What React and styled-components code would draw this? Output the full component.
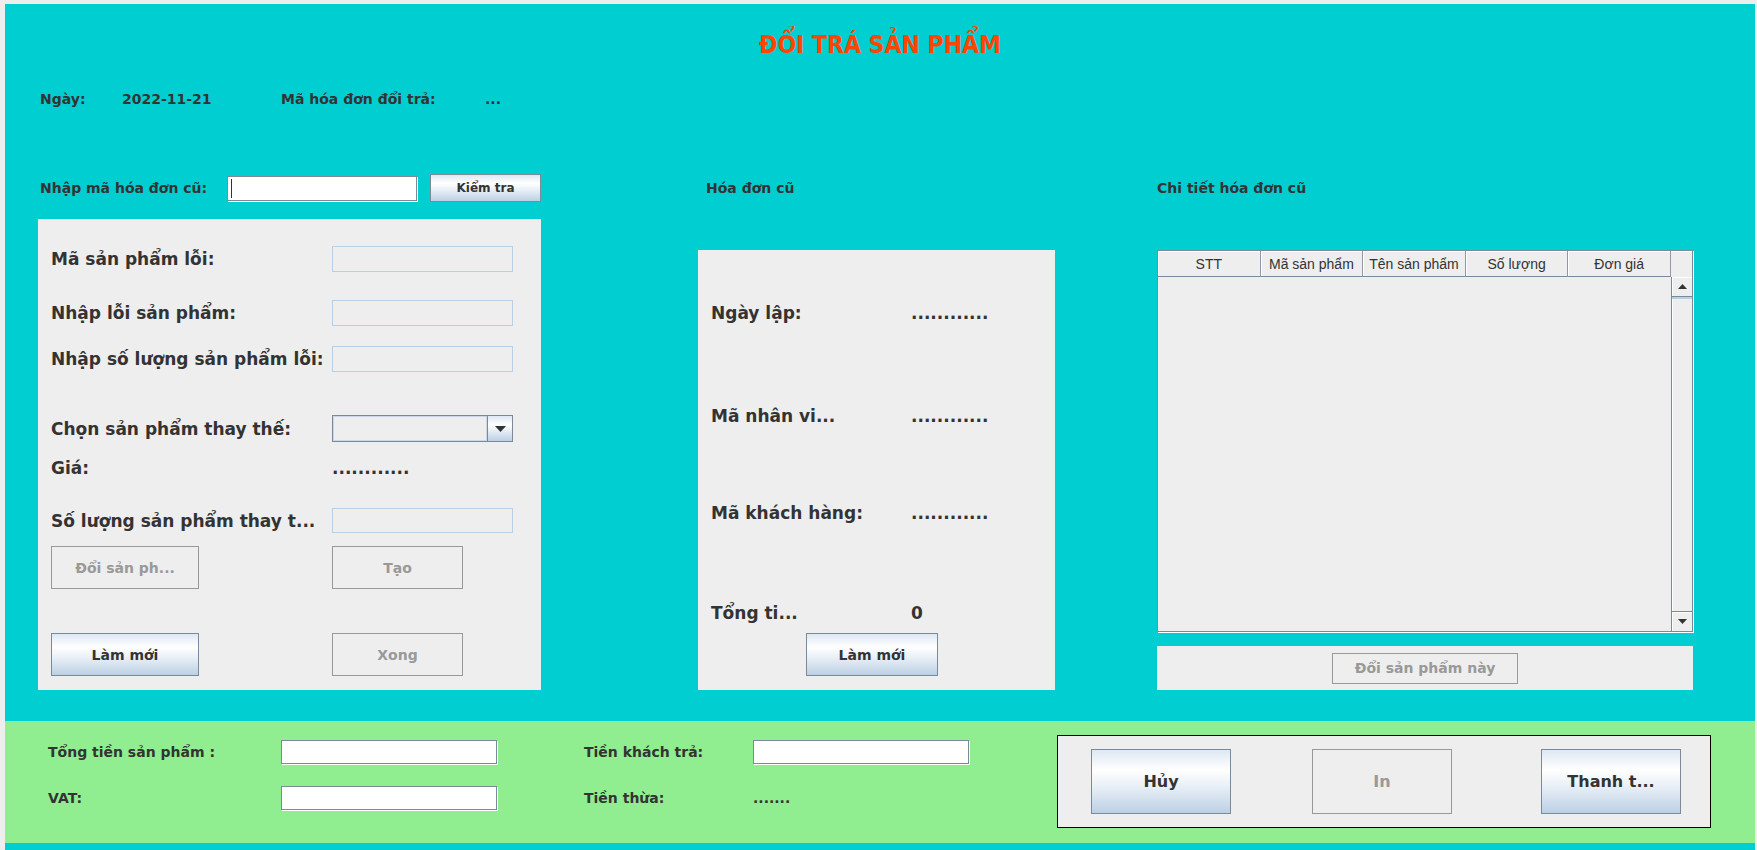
import styled, { createGlobalStyle } from "styled-components";

const GlobalStyle = createGlobalStyle`
  html, body {
    margin: 0;
    padding: 0;
    background: #eeeeee;
    overflow: hidden;
  }
  body {
    font-family: "DejaVu Sans", Tahoma, sans-serif;
  }
  #root {
    padding: 4px 2px 0 5px;
  }
`;

function Triangle({ up, w = 10, h = 5 }) {
  return (
    <svg width={w} height={h} viewBox={`0 0 ${w} ${h}`}>
      <polygon
        points={up ? `0,${h} ${w},${h} ${w / 2},0` : `0,0 ${w},0 ${w / 2},${h}`}
        fill="#333"
      />
    </svg>
  );
}

export default function App() {
  return (
    <>
      <GlobalStyle />
      <Main>
        <Title>ĐỔI TRÁ SẢN PHẨM</Title>
        <InfoRow>
          <InfoCell $w={82}>Ngày:</InfoCell>
          <InfoCell $w={159}>2022-11-21</InfoCell>
          <InfoCell $w={204}>Mã hóa đơn đổi trả:</InfoCell>
          <InfoCell>...</InfoCell>
        </InfoRow>

        <Body>
          <Column $w={503} $ml={33}>
            <Heading $pl={2}>
              <HeadLabel>Nhập mã hóa đơn cũ:</HeadLabel>
              <InputWrap>
                <WhiteInput $w={190} $h={25} />
                <Caret />
              </InputWrap>
              <Button $w={111} $h={28} $fs={12} $ml={13}>
                Kiểm tra
              </Button>
            </Heading>
            <FormPanel>
              <FormRow $h={26} $mt={27}>
                <FormLabel>Mã sản phẩm lỗi:</FormLabel>
                <DisabledInput disabled />
              </FormRow>
              <FormRow $h={26} $mt={28}>
                <FormLabel>Nhập lỗi sản phẩm:</FormLabel>
                <DisabledInput disabled />
              </FormRow>
              <FormRow $h={26} $mt={20}>
                <FormLabel>Nhập số lượng sản phẩm lỗi:</FormLabel>
                <DisabledInput disabled />
              </FormRow>
              <FormRow $h={27} $mt={43}>
                <FormLabel>Chọn sản phẩm thay thế:</FormLabel>
                <Combo>
                  <ComboValue />
                  <ComboArrow>
                    <Triangle w={11} h={6} />
                  </ComboArrow>
                </Combo>
              </FormRow>
              <FormRow $h={24} $mt={14}>
                <FormLabel>Giá:</FormLabel>
                <Value>............</Value>
              </FormRow>
              <FormRow $h={25} $mt={28}>
                <FormLabel>Số lượng sản phẩm thay t...</FormLabel>
                <DisabledInput disabled />
              </FormRow>
              <FormRow $h={43} $mt={13}>
                <ButtonSlot>
                  <Button $w={148} $h={43} disabled>
                    Đổi sản ph...
                  </Button>
                </ButtonSlot>
                <Button $w={131} $h={43} disabled>
                  Tạo
                </Button>
              </FormRow>
              <FormRow $h={43} $mt={44}>
                <ButtonSlot>
                  <Button $w={148} $h={43}>
                    Làm mới
                  </Button>
                </ButtonSlot>
                <Button $w={131} $h={43} disabled>
                  Xong
                </Button>
              </FormRow>
            </FormPanel>
          </Column>

          <Column $w={357} $ml={157}>
            <Heading $pl={8}>Hóa đơn cũ</Heading>
            <InvoicePanel>
              <InvoiceRow $mt={51}>
                <InvoiceLabel>Ngày lập:</InvoiceLabel>
                <Value>............</Value>
              </InvoiceRow>
              <InvoiceRow $mt={79}>
                <InvoiceLabel>Mã nhân vi...</InvoiceLabel>
                <Value>............</Value>
              </InvoiceRow>
              <InvoiceRow $mt={73}>
                <InvoiceLabel>Mã khách hàng:</InvoiceLabel>
                <Value>............</Value>
              </InvoiceRow>
              <InvoiceRow $mt={76}>
                <InvoiceLabel>Tổng ti...</InvoiceLabel>
                <Value>0</Value>
              </InvoiceRow>
              <Button $w={132} $h={43} $ml={95} $mt={8}>
                Làm mới
              </Button>
            </InvoicePanel>
          </Column>

          <Column $w={536} $ml={102}>
            <Heading>Chi tiết hóa đơn cũ</Heading>
            <Table>
              <TableHead>
                <HeadCell>STT</HeadCell>
                <HeadCell>Mã sản phẩm</HeadCell>
                <HeadCell>Tên sản phẩm</HeadCell>
                <HeadCell>Số lượng</HeadCell>
                <HeadCell>Đơn giá</HeadCell>
                <HeadCorner />
              </TableHead>
              <TableBody>
                <Rows />
                <ScrollBar>
                  <ScrollButton>
                    <Triangle up w={9} h={5} />
                  </ScrollButton>
                  <Track />
                  <ScrollButton $bottom>
                    <Triangle w={9} h={5} />
                  </ScrollButton>
                </ScrollBar>
              </TableBody>
            </Table>
            <LowerBar>
              <Button $w={186} $h={31} disabled>
                Đổi sản phẩm này
              </Button>
            </LowerBar>
          </Column>
        </Body>

        <Footer>
          <FooterGrid>
            <FooterLabel>Tổng tiền sản phẩm :</FooterLabel>
            <WhiteInput $w={216} $h={24} />
            <FooterLabel>Tiền khách trả:</FooterLabel>
            <WhiteInput $w={216} $h={24} />
            <FooterLabel>VAT:</FooterLabel>
            <WhiteInput $w={216} $h={24} />
            <FooterLabel>Tiền thừa:</FooterLabel>
            <FooterLabel>.......</FooterLabel>
          </FooterGrid>
          <ActionBox>
            <Button $w={140} $h={65} $fs={16}>
              Hủy
            </Button>
            <Button $w={140} $h={65} $fs={16} $ml={81} disabled>
              In
            </Button>
            <Button $w={140} $h={65} $fs={16} $ml={89}>
              Thanh t...
            </Button>
          </ActionBox>
        </Footer>
      </Main>
    </>
  );
}

const Main = styled.div`
  background: #00ced1;
  height: 846px;
  box-sizing: border-box;
  padding: 28px 0 7px;
  display: flex;
  flex-direction: column;
`;

const Title = styled.h1`
  margin: 0;
  text-align: center;
  font: bold 22px/26px "DejaVu Sans", Tahoma, sans-serif;
  color: #ff4500;
  transform: scaleY(1.1);
`;

const InfoRow = styled.div`
  display: flex;
  margin: 31px 0 0 35px;
  height: 20px;
  font: bold 14px/20px "DejaVu Sans", Tahoma, sans-serif;
  color: #333;
`;

const InfoCell = styled.span`
  width: ${(p) => (p.$w ? `${p.$w}px` : "auto")};
  white-space: nowrap;
`;

const Body = styled.div`
  display: flex;
  margin-top: 65px;
  height: 516px;
  flex-shrink: 0;
`;

const Column = styled.div`
  display: flex;
  flex-direction: column;
  width: ${(p) => p.$w}px;
  margin-left: ${(p) => p.$ml}px;
`;

const Heading = styled.div`
  height: 28px;
  flex-shrink: 0;
  display: flex;
  align-items: center;
  padding-left: ${(p) => p.$pl || 0}px;
  font: bold 14px/20px "DejaVu Sans", Tahoma, sans-serif;
  color: #333;
  white-space: nowrap;
`;

const HeadLabel = styled.span`
  width: 187px;
`;

const InputWrap = styled.div`
  position: relative;
  display: flex;
`;

const Caret = styled.span`
  position: absolute;
  left: 4px;
  top: 3px;
  width: 1px;
  height: 19px;
  background: #333;
`;

const WhiteInput = styled.input`
  width: ${(p) => p.$w}px;
  height: ${(p) => p.$h}px;
  box-sizing: border-box;
  margin: 0;
  padding: 0 4px;
  border: 1px solid #7a8a99;
  box-shadow: 1px 1px 0 #ffffff;
  background: #ffffff;
  outline: none;
`;

const Button = styled.button`
  width: ${(p) => p.$w}px;
  height: ${(p) => p.$h}px;
  flex-shrink: 0;
  margin: ${(p) => p.$mt || 0}px 0 0 ${(p) => p.$ml || 0}px;
  padding: 0;
  box-sizing: border-box;
  border: 1px solid #7a8a99;
  background: linear-gradient(
    to bottom,
    #dde8f3 0%,
    #ffffff 32%,
    #e6eef6 60%,
    #bcd0e4 100%
  );
  font: bold ${(p) => p.$fs || 14}px "DejaVu Sans", Tahoma, sans-serif;
  color: #333;
  white-space: nowrap;

  &:disabled {
    border-color: #999999;
    background: #eeeeee;
    color: #999999;
  }
`;

const FormPanel = styled.div`
  flex: 1;
  margin-top: 17px;
  background: #eeeeee;
  display: flex;
  flex-direction: column;
  padding: 0 28px 0 13px;
`;

const FormRow = styled.div`
  display: flex;
  align-items: center;
  height: ${(p) => p.$h}px;
  margin-top: ${(p) => p.$mt}px;
  flex-shrink: 0;
`;

const FormLabel = styled.span`
  width: 281px;
  flex-shrink: 0;
  font: bold 17px/22px "DejaVu Sans", Tahoma, sans-serif;
  color: #333;
  white-space: nowrap;
  overflow: hidden;
`;

const DisabledInput = styled.input`
  width: 181px;
  height: 100%;
  box-sizing: border-box;
  margin: 0;
  border: 1px solid #b8cfe5;
  background: #eeeeee;
`;

const Combo = styled.div`
  width: 181px;
  height: 100%;
  box-sizing: border-box;
  border: 1px solid #7a8a99;
  display: flex;
  background: #eeeeee;
`;

const ComboValue = styled.div`
  flex: 1;
  box-shadow: inset 0 0 0 1px #c8d8e8;
`;

const ComboArrow = styled.div`
  width: 24px;
  border-left: 1px solid #7a8a99;
  display: flex;
  align-items: center;
  justify-content: center;
  background: linear-gradient(to bottom, #dde8f3 0%, #ffffff 35%, #bcd0e4 100%);
`;

const Value = styled.span`
  font: bold 17px/22px "DejaVu Sans", Tahoma, sans-serif;
  color: #333;
  white-space: nowrap;
`;

const ButtonSlot = styled.div`
  width: 281px;
  flex-shrink: 0;
`;

const InvoicePanel = styled.div`
  flex: 1;
  margin-top: 48px;
  background: #eeeeee;
  display: flex;
  flex-direction: column;
  align-items: flex-start;
  padding: 0 13px;
`;

const InvoiceRow = styled.div`
  display: flex;
  align-items: center;
  height: 24px;
  margin-top: ${(p) => p.$mt}px;
`;

const InvoiceLabel = styled.span`
  width: 200px;
  font: bold 17px/22px "DejaVu Sans", Tahoma, sans-serif;
  color: #333;
  white-space: nowrap;
`;

const Table = styled.div`
  margin-top: 48px;
  height: 382px;
  flex-shrink: 0;
  box-sizing: border-box;
  border: 1px solid #7a8a99;
  box-shadow: 1px 1px 0 #ffffff;
  background: #eeeeee;
  display: flex;
  flex-direction: column;
`;

const TableHead = styled.div`
  display: flex;
  height: 26px;
  flex-shrink: 0;
`;

const HeadCell = styled.div`
  flex: 1;
  box-sizing: border-box;
  border-right: 1px solid #8e9aa6;
  border-bottom: 1px solid #7a8a99;
  box-shadow: inset 1px 1px 0 #ffffff;
  display: flex;
  align-items: center;
  justify-content: center;
  font: 14px "Liberation Sans", Arial, sans-serif;
  color: #333;
  white-space: nowrap;
  overflow: hidden;
`;

const HeadCorner = styled.div`
  width: 21px;
  box-shadow: inset 0 1px 0 #ffffff;
`;

const TableBody = styled.div`
  flex: 1;
  display: flex;
`;

const Rows = styled.div`
  flex: 1;
`;

const ScrollBar = styled.div`
  width: 21px;
  box-sizing: border-box;
  border-left: 1px solid #7a8a99;
  display: flex;
  flex-direction: column;
`;

const ScrollButton = styled.div`
  height: 20px;
  box-sizing: border-box;
  border-${(p) => (p.$bottom ? "top" : "bottom")}: 1px solid #7a8a99;
  box-shadow: inset 1px 1px 0 #ffffff;
  display: flex;
  align-items: center;
  justify-content: center;
  background: #eeeeee;
`;

const Track = styled.div`
  flex: 1;
  border-top: 2px solid #b8cfe5;
  box-shadow: inset 1px 0 0 #ffffff;
`;

const LowerBar = styled.div`
  margin-top: 14px;
  height: 44px;
  background: #eeeeee;
  display: flex;
  align-items: center;
  justify-content: center;
`;

const Footer = styled.div`
  margin-top: 31px;
  height: 122px;
  flex-shrink: 0;
  background: #90ee90;
  display: flex;
  align-items: flex-start;
`;

const FooterGrid = styled.div`
  display: grid;
  grid-template-columns: 233px 303px 169px 216px;
  grid-auto-rows: 24px;
  row-gap: 22px;
  align-items: center;
  margin: 19px 0 0 43px;
`;

const FooterLabel = styled.span`
  font: bold 14px/20px "DejaVu Sans", Tahoma, sans-serif;
  color: #333;
  white-space: nowrap;
`;

const ActionBox = styled.div`
  margin: 14px 0 0 88px;
  width: 654px;
  height: 93px;
  box-sizing: border-box;
  border: 1px solid #000000;
  background: #eeeeee;
  display: flex;
  align-items: center;
  padding: 0 29px 0 33px;
`;
